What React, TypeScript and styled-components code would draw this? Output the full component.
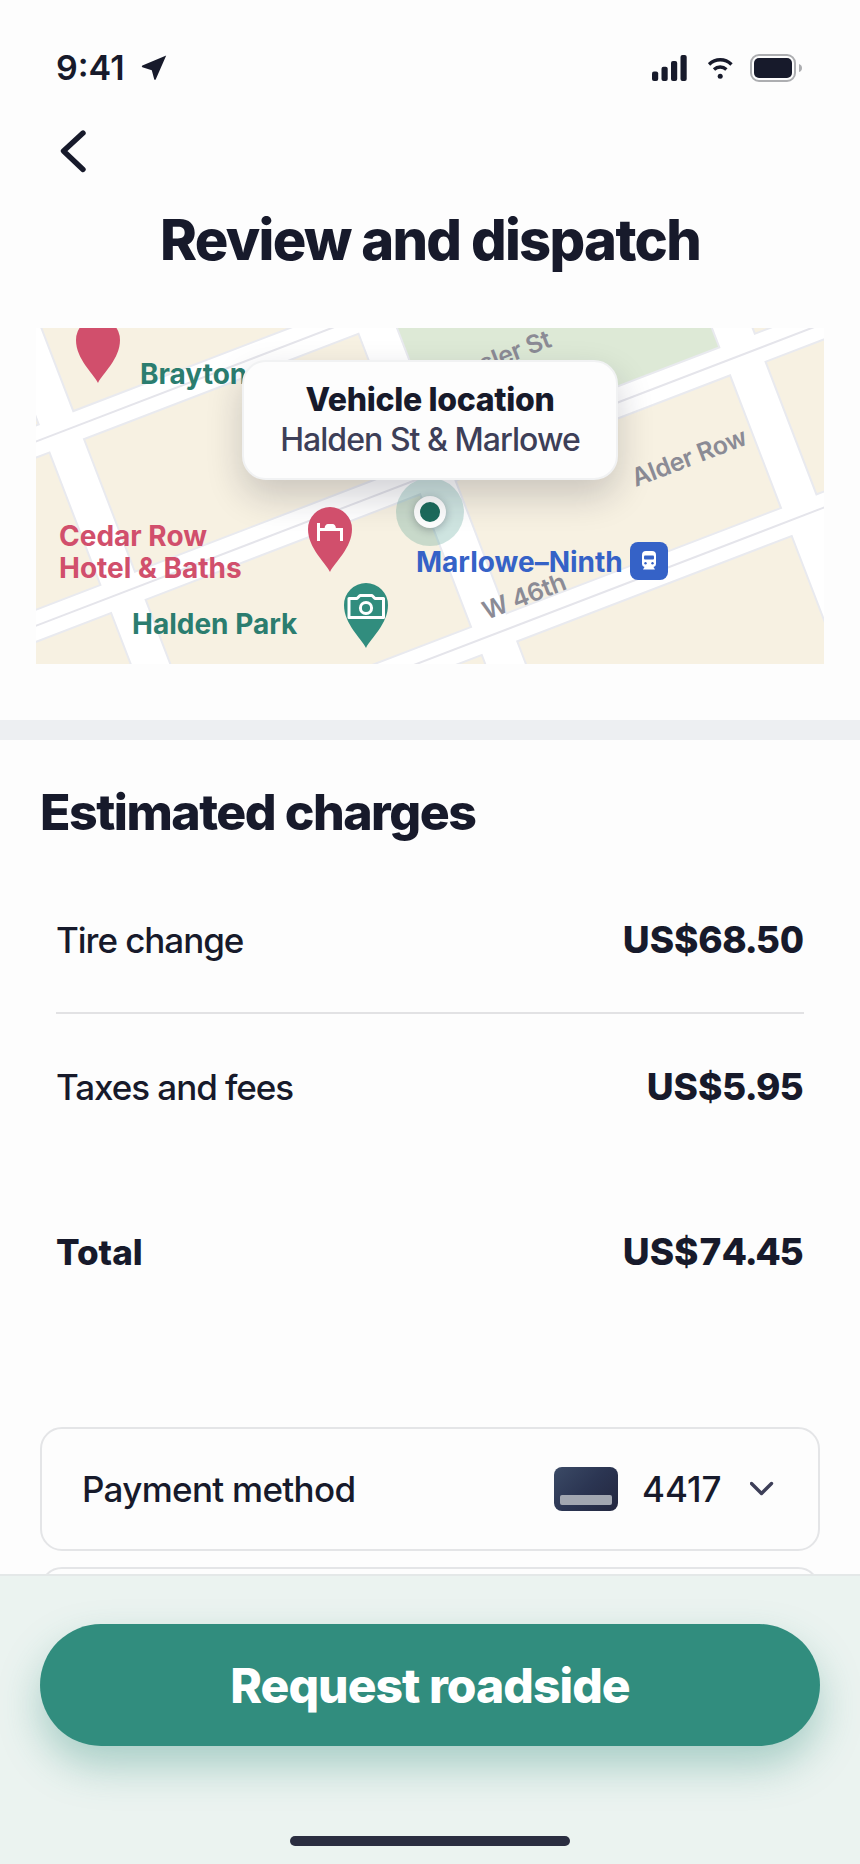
import React from "react";
import styled, { createGlobalStyle } from "styled-components";

const ink = "#171a2b";
const teal = "#318d7e";
const rose = "#d14f6c";

const GlobalStyle = createGlobalStyle`
  *, *::before, *::after { box-sizing: border-box; }
  html, body { margin: 0; }
  body {
    background: #fdfdfd;
    color: ${ink};
    font-family: Inter, "Liberation Sans", sans-serif;
  }
  h1, h2, p { margin: 0; }
  button, select { font: inherit; color: inherit; letter-spacing: inherit; }
`;

const Screen = styled.div`
  display: flex;
  flex-direction: column;
  height: 100vh;
`;

const Content = styled.main`
  flex: 1;
  min-height: 0;
  overflow-y: auto;
  scrollbar-width: none;
`;

const StatusBar = styled.header`
  display: flex;
  align-items: center;
  justify-content: space-between;
  padding: 48px 56px 0;
`;

const StatusGroup = styled.div`
  display: flex;
  align-items: center;
  gap: 16px;
`;

const Clock = styled.span`
  font-size: 34px;
  font-weight: 600;
  line-height: 40px;
`;

const BackButton = styled.button`
  display: block;
  margin: 36px 0 0 52px;
  padding: 4px;
  border: 0;
  background: none;
  svg { display: block; }
`;

const Title = styled.h1`
  margin: 30px 0 56px;
  text-align: center;
  font-size: 56px;
  font-weight: 800;
  line-height: 64px;
  letter-spacing: -0.03em;
`;

const Map = styled.section`
  position: relative;
  height: 336px;
  margin: 0 36px 56px;
  overflow: hidden;
  background: #ffffff;
`;

const MapArt = styled.svg`
  display: block;
  width: 100%;
  height: 100%;
`;

/* Map items are placed from the map's horizontal centre. */
const Place = styled.div<{ $x: number; $y: number }>`
  position: absolute;
  left: calc(50% + ${(p) => p.$x}px);
  top: ${(p) => p.$y}px;
  svg { display: block; }
`;

const PlaceLabel = styled(Place)<{ $color: string }>`
  color: ${(p) => p.$color};
  font-size: 28px;
  font-weight: 700;
  line-height: 32px;
  white-space: nowrap;
`;

const StreetLabel = styled(Place)`
  color: #8b8b95;
  font-size: 25px;
  font-weight: 600;
  line-height: 32px;
  letter-spacing: -0.01em;
  white-space: nowrap;
  transform: translate(-50%, -50%) rotate(-21deg);
`;

const StationBadge = styled(Place)`
  display: grid;
  place-items: center;
  width: 38px;
  height: 38px;
  border-radius: 8px;
  background: #3562c7;
`;

const Halo = styled(Place)`
  display: grid;
  place-items: center;
  width: 68px;
  height: 68px;
  border-radius: 50%;
  background: rgba(49, 141, 126, 0.24);
`;

const Dot = styled.div`
  width: 32px;
  height: 32px;
  border: 6px solid #fdfdfd;
  border-radius: 50%;
  background: #1c6b5c;
  box-shadow: 0 2px 8px rgba(23, 26, 43, 0.3);
`;

const Callout = styled.div`
  position: absolute;
  top: 32px;
  left: 50%;
  transform: translateX(-50%);
  width: 376px;
  padding: 18px 0;
  border: 2px solid #f1f2f3;
  border-radius: 24px;
  background: #fdfdfd;
  box-shadow: 0 16px 36px rgba(23, 26, 43, 0.2);
  text-align: center;
`;

const CalloutTitle = styled.h2`
  font-size: 32px;
  font-weight: 800;
  line-height: 40px;
  letter-spacing: -0.01em;
`;

const CalloutText = styled.p`
  color: #3d3f58;
  font-size: 32px;
  font-weight: 450;
  line-height: 40px;
  letter-spacing: -0.03em;
`;

const Band = styled.div`
  height: 20px;
  background: #edeff2;
`;

const Charges = styled.section`
  padding: 40px 40px 0;
`;

const SectionTitle = styled.h2`
  font-size: 50px;
  font-weight: 800;
  line-height: 64px;
  letter-spacing: -0.03em;
`;

const ChargeTable = styled.table`
  width: calc(100% - 32px);
  margin: 24px 16px 102px;
  border-collapse: collapse;
  line-height: 44px;
`;

const ChargeRow = styled.tr<{ $ruled?: boolean }>`
  height: ${(p) => (p.$ruled ? 145 : 146)}px;
  border-bottom: ${(p) => (p.$ruled ? "2px solid #e2e2e4" : "0")};
`;

const TotalRow = styled.tr`
  height: 166px;
  th, td { padding-top: 20px; }
`;

const ChargeName = styled.th<{ $bold?: boolean }>`
  padding: 0;
  text-align: left;
  font-size: 35px;
  font-weight: ${(p) => (p.$bold ? 800 : 450)};
  letter-spacing: ${(p) => (p.$bold ? "0" : "-0.03em")};
`;

const ChargeAmount = styled.td`
  padding: 0;
  text-align: right;
  font-size: 37px;
  font-weight: 800;
  font-variant-numeric: tabular-nums;
`;

const OptionCard = styled.div`
  display: flex;
  align-items: center;
  height: 124px;
  margin-bottom: 16px;
  padding: 0 44px 0 40px;
  border: 2px solid #e4e5e7;
  border-radius: 22px;
  font-size: 35px;
  font-weight: 450;
  line-height: 44px;
`;

const OptionLabel = styled.label`
  margin-right: auto;
  letter-spacing: -0.02em;
`;

const BankCard = styled.span`
  display: flex;
  align-items: flex-end;
  width: 64px;
  height: 44px;
  margin-right: 24px;
  padding: 6px;
  border-radius: 8px;
  background: linear-gradient(135deg, #3b4a66, #2b3552 50%, #23273f);
`;

const CardStripe = styled.span`
  flex: 1;
  height: 10px;
  border-radius: 2px;
  background: #a2a7b1;
`;

const SelectWrap = styled.span`
  position: relative;
  display: block;
  svg {
    position: absolute;
    top: 12px;
    right: 0;
    pointer-events: none;
  }
`;

const CardSelect = styled.select`
  display: block;
  padding: 0 52px 0 0;
  border: 0;
  background: none;
  appearance: none;
  line-height: 44px;
`;

const Footer = styled.footer`
  display: flex;
  flex-direction: column;
  align-items: center;
  padding: 48px 40px 18px;
  border-top: 2px solid #e4e8e8;
  background: #ebf3f0;
`;

const RequestButton = styled.button`
  width: 100%;
  height: 122px;
  margin-bottom: 90px;
  border: 0;
  border-radius: 61px;
  background: ${teal};
  box-shadow: 0 20px 40px rgba(49, 141, 126, 0.36);
  color: #ffffff;
  font-size: 48px;
  font-weight: 800;
  letter-spacing: -0.02em;
`;

const HomeIndicator = styled.div`
  width: 280px;
  height: 10px;
  border-radius: 5px;
  background: #2a2d40;
`;

const columns = [-326, 5, 337, 669];
const rows = [-51, 121, 293, 465];

function MapBlocks() {
  return (
    <MapArt viewBox="0 0 788 336" preserveAspectRatio="xMidYMid slice" aria-hidden="true">
      <g transform="rotate(-21)">
        {rows.map((v, r) =>
          columns.map((u, c) => (
            <rect
              key={`${r}-${c}`}
              x={u}
              y={v}
              width={294}
              height={142}
              fill={r === 1 && c === 2 ? "#dde9d6" : "#f7f1e2"}
              stroke="#e9eaef"
              strokeWidth="2"
            />
          ))
        )}
        {[106, 278, 450].map((v) => (
          <path key={v} d={`M-330 ${v}H970`} stroke="#e5e5eb" strokeWidth="2" />
        ))}
      </g>
    </MapArt>
  );
}

function Pin({ color, children }: { color: string; children?: React.ReactNode }) {
  return (
    <svg width="44" height="66" viewBox="0 0 44 66" aria-hidden="true">
      <path d="M22 65C17 55 0 41 0 22A22 22 0 0 1 44 22C44 41 27 55 22 65Z" fill={color} />
      {children}
    </svg>
  );
}

export default function App() {
  return (
    <>
      <GlobalStyle />
      <Screen>
        <Content>
          <StatusBar>
            <StatusGroup>
              <Clock>9:41</Clock>
              <svg width="26" height="26" viewBox="0 0 26 26" aria-hidden="true">
                <path d="M25.200 0.400L14.800 24.200Q14 25.600 13.200 24.200L10.800 15.200L1.400 12.200Q0 11.400 1.400 10.600Z" fill={ink} />
              </svg>
            </StatusGroup>
            <StatusGroup>
              <svg width="40" height="28" viewBox="0 0 40 28" fill={ink} aria-hidden="true">
                <rect x="0" y="17.5" width="6.200" height="9.5" rx="2" />
                <rect x="9.5" y="12.8" width="6.200" height="14.2" rx="2" />
                <rect x="19" y="7" width="6.200" height="20" rx="2" />
                <rect x="28.5" y="1" width="6.200" height="26" rx="2" />
              </svg>
              <svg width="26" height="24" viewBox="0 0 26 24" fill="none" stroke={ink} aria-hidden="true">
                <path d="M1 8.4C7.500 2.2 17 2.2 23.500 8.4" strokeWidth="3.4" />
                <path d="M6 13.4C9.600 10.2 14.800 10.2 18.400 13.4" strokeWidth="3.4" />
                <circle cx="12.2" cy="20.2" r="2.5" fill={ink} stroke="none" />
              </svg>
              <svg width="54" height="28" viewBox="0 0 54 28" aria-hidden="true">
                <rect x="1" y="1" width="44" height="26" rx="8" fill="none" stroke="#adaeb1" strokeWidth="2" />
                <rect x="4" y="4" width="38" height="20" rx="5" fill={ink} />
                <path d="M49 10Q52 11 52 14T49 18Z" fill="#adaeb1" />
              </svg>
            </StatusGroup>
          </StatusBar>

          <BackButton type="button" aria-label="Back">
            <svg width="32" height="46" viewBox="0 0 32 46" fill="none" aria-hidden="true">
              <path d="M27 5L7.500 23L27 41.500" stroke={ink} strokeWidth="5.400" strokeLinecap="round" strokeLinejoin="round" />
            </svg>
          </BackButton>

          <Title>Review and dispatch</Title>

          <Map aria-label="Vehicle location">
            <MapBlocks />
            <Place $x={-354} $y={-10}><Pin color={rose} /></Place>
            <PlaceLabel $x={-290} $y={30} $color="#2b7d6f">Brayton</PlaceLabel>
            <StreetLabel $x={64} $y={31}>Kessler St</StreetLabel>
            <StreetLabel $x={259} $y={129}>Alder Row</StreetLabel>
            <StreetLabel $x={94} $y={268}>W 46th</StreetLabel>
            <PlaceLabel $x={-371} $y={192} $color={rose}>
              Cedar Row
              <br />
              Hotel &amp; Baths
            </PlaceLabel>
            <PlaceLabel $x={-298} $y={280} $color="#2b7d6f">Halden Park</PlaceLabel>
            <PlaceLabel $x={-14} $y={218} $color="#3562c7">Marlowe–Ninth</PlaceLabel>
            <StationBadge $x={200} $y={214}>
              <svg width="16" height="20" viewBox="0 0 16 20" aria-hidden="true">
                <path d="M5 0H11Q15 0 15 4V13Q15 15.500 12.500 16L14 18.500H2L3.500 16Q1 15.500 1 13V4Q1 0 5 0Z" fill="#ffffff" />
                <rect x="3" y="4.500" width="10" height="4" rx="1" fill="#3562c7" />
                <circle cx="4.500" cy="12.200" r="1.200" fill="#3562c7" />
                <circle cx="11.500" cy="12.200" r="1.200" fill="#3562c7" />
              </svg>
            </StationBadge>
            <Halo $x={-34} $y={150}><Dot /></Halo>
            <Callout>
              <CalloutTitle>Vehicle location</CalloutTitle>
              <CalloutText>Halden St &amp; Marlowe</CalloutText>
            </Callout>
            <Place $x={-122} $y={179}>
              <Pin color={rose}>
                <path d="M10.500 16V34M10.500 22.500H33.500V34" fill="none" stroke="#ffffff" strokeWidth="3" />
                <path d="M16.500 21.500Q17 17 20 17H24.500Q27.500 17 28 21.500Z" fill="#ffffff" />
              </Pin>
            </Place>
            <Place $x={-86} $y={255}>
              <Pin color={teal}>
                <path d="M5 15.500H13L16 12.500H28L31 15.500H39.500V34.500H5Z" fill="none" stroke="#ffffff" strokeWidth="3" strokeLinejoin="round" />
                <circle cx="22" cy="25" r="5.600" fill="none" stroke="#ffffff" strokeWidth="3" />
              </Pin>
            </Place>
          </Map>

          <Band />

          <Charges>
            <SectionTitle>Estimated charges</SectionTitle>
            <ChargeTable>
              <tbody>
                <ChargeRow $ruled>
                  <ChargeName scope="row">Tire change</ChargeName>
                  <ChargeAmount>US$68.50</ChargeAmount>
                </ChargeRow>
                <ChargeRow>
                  <ChargeName scope="row">Taxes and fees</ChargeName>
                  <ChargeAmount>US$5.95</ChargeAmount>
                </ChargeRow>
              </tbody>
              <tfoot>
                <TotalRow>
                  <ChargeName scope="row" $bold>Total</ChargeName>
                  <ChargeAmount>US$74.45</ChargeAmount>
                </TotalRow>
              </tfoot>
            </ChargeTable>

            <OptionCard>
              <OptionLabel htmlFor="payment">Payment method</OptionLabel>
              <BankCard><CardStripe /></BankCard>
              <SelectWrap>
                <CardSelect id="payment" defaultValue="4417">
                  <option value="4417">4417</option>
                </CardSelect>
                <svg width="24" height="20" viewBox="0 0 24 20" fill="none" aria-hidden="true">
                  <path d="M1.500 4.500L11.500 14.500L21.500 4.500" stroke="#3d3f58" strokeWidth="3.400" strokeLinecap="round" strokeLinejoin="round" />
                </svg>
              </SelectWrap>
            </OptionCard>
            <OptionCard />
          </Charges>
        </Content>

        <Footer>
          <RequestButton type="button">Request roadside</RequestButton>
          <HomeIndicator />
        </Footer>
      </Screen>
    </>
  );
}
